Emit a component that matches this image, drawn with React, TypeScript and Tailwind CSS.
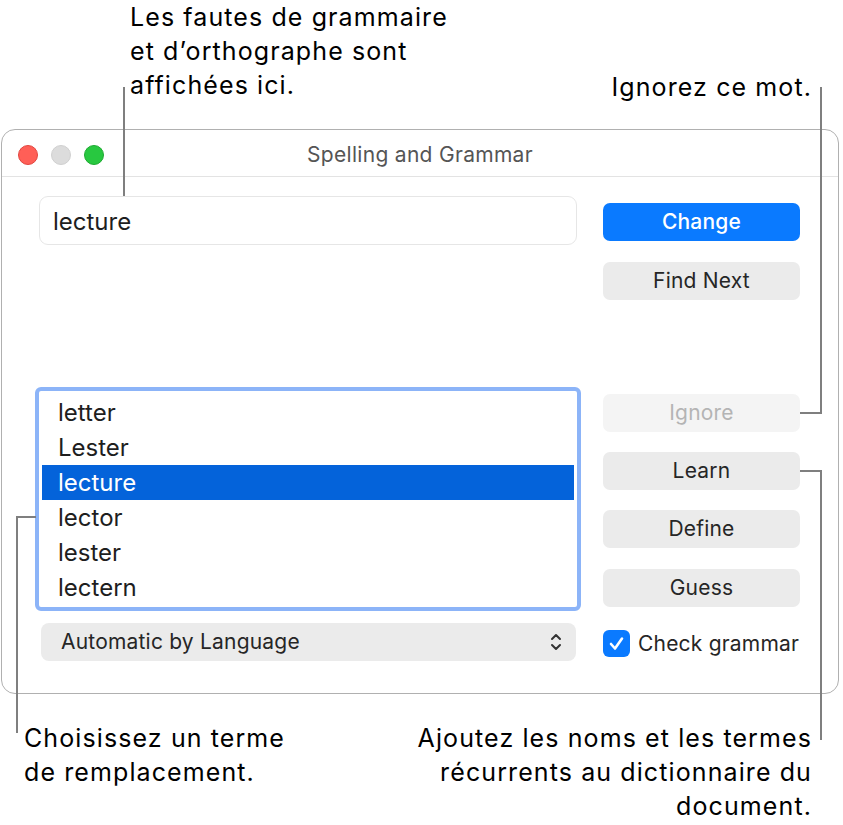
import React from "react";

const font = { fontFamily: "Inter, 'Noto Sans', sans-serif" };

function Btn({ label, primary, disabled }: { label: string; primary?: boolean; disabled?: boolean }) {
  const cls = primary
    ? "bg-[#0a7aff] text-white font-medium"
    : disabled
    ? "bg-[#f4f4f4] text-[#b4b4b4]"
    : "bg-[#ebebeb] text-[#262626]";
  return (
    <div className={`h-[38px] w-[197px] rounded-[7px] flex items-center justify-center text-[21px] tracking-[0.2px] ${cls}`}>
      {label}
    </div>
  );
}

export default function App() {
  const items = ["letter", "Lester", "lecture", "lector", "lester", "lectern"];
  return (
    <div className="relative w-[843px] h-[825px] bg-white overflow-hidden" style={font}>
      <div className="pt-[129px] pl-[1px]">
        <div className="w-[838px] h-[565px] rounded-[14px] border border-[#b0b0b0] bg-white overflow-hidden">
          <div className="h-[47px] pt-[4px] border-b border-[#e3e3e3] flex items-center relative">
            <div className="flex gap-[13px] pl-[16px]">
              <div className="w-[20px] h-[20px] rounded-full bg-[#ff5f57] border border-[#e2463f]" />
              <div className="w-[20px] h-[20px] rounded-full bg-[#dcdcdc] border border-[#d0d0d0]" />
              <div className="w-[20px] h-[20px] rounded-full bg-[#28c840] border border-[#1eaa32]" />
            </div>
            <div className="absolute inset-0 pt-[4px] flex items-center justify-center text-[21px] tracking-[0.3px] text-[#555555]">
              Spelling and Grammar
            </div>
          </div>
          <div className="flex pl-[33px]">
            <div className="w-[546px] pt-[19px] flex flex-col">
              <div className="ml-[4px] w-[538px] h-[49px] rounded-[9px] border border-[#e6e6e6] flex items-center pl-[13px] pt-[2px] text-[24px] text-[#1e1e1e]">
                lecture
              </div>
              <div className="mt-[142px] h-[224px] rounded-[6px] border-[4px] border-[#8cb4f8] bg-white p-[3px] pt-[4px] flex flex-col">
                {items.map((w) => (
                  <div
                    key={w}
                    className={`h-[35px] shrink-0 flex items-center pl-[16px] text-[24px] ${
                      w === "lecture" ? "bg-[#0463da] text-white" : "text-[#1e1e1e]"
                    }`}
                  >
                    {w}
                  </div>
                ))}
              </div>
              <div className="mt-[12px] ml-[6px] w-[535px] h-[38px] rounded-[8px] bg-[#ebebeb] flex items-center justify-between pl-[20px] pr-[14px] text-[21px] tracking-[0.2px] text-[#262626]">
                <span>Automatic by Language</span>
                <svg width="12" height="20" viewBox="0 0 12 20" fill="none" stroke="#333" strokeWidth="2" strokeLinecap="round" strokeLinejoin="round">
                  <path d="M2 7 L6 3 L10 7" />
                  <path d="M2 13 L6 17 L10 13" />
                </svg>
              </div>
            </div>
            <div className="ml-[22px] w-[197px] pt-[26px] flex flex-col">
              <Btn label="Change" primary />
              <div className="mt-[21px]"><Btn label="Find Next" /></div>
              <div className="mt-[94px]"><Btn label="Ignore" disabled /></div>
              <div className="mt-[20px]"><Btn label="Learn" /></div>
              <div className="mt-[20px]"><Btn label="Define" /></div>
              <div className="mt-[21px]"><Btn label="Guess" /></div>
              <div className="mt-[21px] flex items-center gap-[8px] text-[21px] tracking-[0.2px] text-[#262626]">
                <div className="w-[27px] h-[27px] rounded-[6px] bg-[#0a7aff] flex items-center justify-center">
                  <svg width="17" height="17" viewBox="0 0 17 17" fill="none" stroke="white" strokeWidth="2.6" strokeLinecap="round" strokeLinejoin="round">
                    <path d="M3 9 L7 13.5 L14 3.5" />
                  </svg>
                </div>
                <span>Check grammar</span>
              </div>
            </div>
          </div>
        </div>
      </div>

      {/* annotation texts */}
      <div className="absolute left-[130px] top-[0px] text-[25px] tracking-[1.1px] leading-[34px] text-black">
        Les fautes de grammaire<br />et d’orthographe sont<br />affichées ici.
      </div>
      <div className="absolute right-[31px] top-[70px] text-[25px] tracking-[1.1px] leading-[34px] text-black text-right">
        Ignorez ce mot.
      </div>
      <div className="absolute left-[24px] top-[721px] text-[25px] tracking-[1.1px] leading-[34px] text-black">
        Choisissez un terme<br />de remplacement.
      </div>
      <div className="absolute right-[31px] top-[721px] text-[25px] tracking-[1.1px] leading-[34px] text-black text-right">
        Ajoutez les noms et les termes<br />récurrents au dictionnaire du<br />document.
      </div>

      {/* callout lines */}
      <div className="absolute left-[123px] top-[87px] w-[2px] h-[109px] bg-[#7f7f7f]" />
      <div className="absolute left-[800px] top-[412px] w-[22px] h-[2px] bg-[#7f7f7f]" />
      <div className="absolute left-[820px] top-[87px] w-[2px] h-[327px] bg-[#7f7f7f]" />
      <div className="absolute left-[800px] top-[470px] w-[22px] h-[2px] bg-[#7f7f7f]" />
      <div className="absolute left-[820px] top-[470px] w-[2px] h-[270px] bg-[#7f7f7f]" />
      <div className="absolute left-[16px] top-[516px] w-[20px] h-[2px] bg-[#7f7f7f]" />
      <div className="absolute left-[16px] top-[516px] w-[2px] h-[217px] bg-[#7f7f7f]" />
    </div>
  );
}
